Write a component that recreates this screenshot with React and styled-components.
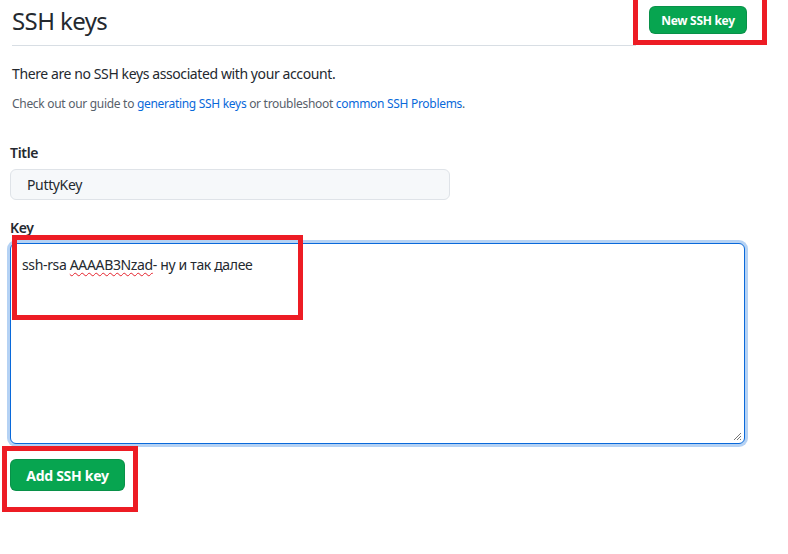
import React from 'react';
import styled, { createGlobalStyle } from 'styled-components';

const GlobalStyle = createGlobalStyle`
  body {
    margin: 0;
    background: #ffffff;
    font-family: "Segoe UI", "Noto Sans", "Liberation Sans", sans-serif;
    color: #24292f;
  }
`;

const Page = styled.div`
  position: relative;
  width: 788px;
  height: 554px;
  overflow: hidden;
  background: #fff;
`;

const Header = styled.header`
  display: flex;
  align-items: flex-end;
  gap: 13px;
  padding: 0 41px 0 12px;
`;

const TitleBar = styled.div`
  flex: 1;
  height: 46px;
  display: flex;
  align-items: center;
  border-bottom: 1px solid #d8dee4;
  box-sizing: border-box;
`;

const Heading = styled.h2`
  margin: 0;
  padding-bottom: 4px;
  font-size: 24px;
  font-weight: 400;
  line-height: 36px;
  letter-spacing: -0.6px;
  color: #24292f;
`;

const ButtonSlot = styled.div`
  height: 46px;
  display: flex;
  align-items: center;
  padding-bottom: 6px;
  box-sizing: border-box;
`;

const Button = styled.button`
  display: inline-flex;
  align-items: center;
  justify-content: center;
  box-sizing: border-box;
  width: ${p => p.$w}px;
  height: ${p => p.$h}px;
  padding: 0;
  border: 1px solid rgba(27, 31, 36, 0.15);
  border-radius: 6px;
  background: #07a550;
  color: #fff;
  font-family: inherit;
  font-size: ${p => p.$size}px;
  font-weight: 700;
  letter-spacing: -0.3px;
  cursor: pointer;
`;

const Intro = styled.section`
  padding: 17px 12px 0;
`;

const Lead = styled.p`
  margin: 0;
  font-size: 14px;
  line-height: 21px;
  letter-spacing: -0.4px;
  color: #24292f;
`;

const Note = styled.p`
  margin: 11px 0 0;
  font-size: 12px;
  line-height: 18px;
  letter-spacing: -0.3px;
  color: #57606a;
`;

const Link = styled.a`
  color: #0969da;
  text-decoration: none;
`;

const Form = styled.form`
  display: flex;
  flex-direction: column;
  padding: 30px 0 0 10px;
  width: 736px;
`;

const Label = styled.label`
  font-size: 14px;
  font-weight: 600;
  line-height: 20px;
  letter-spacing: -0.3px;
  color: #24292f;
  margin-bottom: 6px;
`;

const Input = styled.div`
  box-sizing: border-box;
  width: 440px;
  height: 31px;
  padding: 0 16px;
  display: flex;
  align-items: center;
  border: 1px solid #dfe3e8;
  border-radius: 6px;
  background: #f6f8fa;
  font-size: 14px;
  letter-spacing: -0.35px;
  color: #24292f;
  margin-bottom: 18px;
`;

const TextArea = styled.div`
  position: relative;
  box-sizing: border-box;
  width: 735px;
  height: 201px;
  padding: 9px 11px;
  border: 1px solid #0969da;
  border-radius: 6px;
  box-shadow: 0 0 0 3px rgba(9, 105, 218, 0.3);
  background: #fff;
  font-size: 14px;
  line-height: 24px;
  letter-spacing: -0.35px;
  color: #24292f;
  margin-top: -1px;
`;

const Misspelled = styled.span`
  text-decoration: underline wavy #e5212b;
  text-decoration-thickness: 1px;
  text-underline-offset: 2px;
`;

const Grip = styled.svg`
  position: absolute;
  right: 2px;
  bottom: 2px;
`;

const Actions = styled.div`
  padding-top: 15px;
`;

const Mark = styled.div`
  position: absolute;
  box-sizing: border-box;
  border: 5px solid #ed1c24;
`;

export default function App() {
  return (
    <Page>
      <GlobalStyle />
      <Header>
        <TitleBar>
          <Heading>SSH keys</Heading>
        </TitleBar>
        <ButtonSlot>
          <Button $w={98} $h={28} $size={12}>New SSH key</Button>
        </ButtonSlot>
      </Header>
      <Intro>
        <Lead>There are no SSH keys associated with your account.</Lead>
        <Note>
          Check out our guide to <Link href="#">generating SSH keys</Link> or troubleshoot{' '}
          <Link href="#">common SSH Problems</Link>.
        </Note>
      </Intro>
      <Form onSubmit={e => e.preventDefault()}>
        <Label>Title</Label>
        <Input>PuttyKey</Input>
        <Label>Key</Label>
        <TextArea>
          ssh-rsa <Misspelled>AAAAB3Nzad</Misspelled>- ну и так далее
          <Grip width="9" height="9" viewBox="0 0 9 9">
            <path d="M8 1L1 8M8 4L4 8M8 7L7 8" stroke="#777" strokeWidth="1" />
          </Grip>
        </TextArea>
        <Actions>
          <Button $w={115} $h={32} $size={14}>Add SSH key</Button>
        </Actions>
      </Form>
      <Mark style={{ left: 633, top: -5, width: 134, height: 50 }} />
      <Mark style={{ left: 12, top: 235, width: 291, height: 85 }} />
      <Mark style={{ left: 2, top: 446, width: 136, height: 66 }} />
    </Page>
  );
}
